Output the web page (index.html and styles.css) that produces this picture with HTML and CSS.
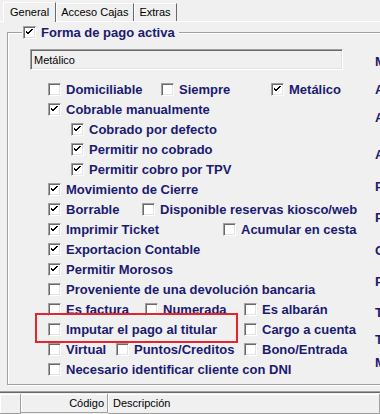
FILE: index.html
```html
<!DOCTYPE html>
<html lang="es">
<head>
  <meta charset="UTF-8" />
  <title>Forma de pago</title>
  <link rel="stylesheet" href="styles.css">
</head>
<body>
  <div class="tabs">
    <div class="tab active">General</div>
    <div class="tab">Acceso Cajas</div>
    <div class="tab">Extras</div>
  </div>

  <fieldset class="group">
    <legend><span class="cb on"><svg viewBox="0 0 11 11"><polyline points="2,4.5 4,6.5 8.5,2"/></svg></span>Forma de pago activa</legend>

    <div class="group-body">
      <div class="left">
        <div class="field">Metálico</div>

        <div class="row">
          <div class="opt w113"><span class="cb"></span>Domiciliable</div>
          <div class="opt w110"><span class="cb"></span>Siempre</div>
          <div class="opt"><span class="cb on"><svg viewBox="0 0 11 11"><polyline points="2,4.5 4,6.5 8.5,2"/></svg></span>Metálico</div>
        </div>
        <div class="row">
          <div class="opt"><span class="cb on"><svg viewBox="0 0 11 11"><polyline points="2,4.5 4,6.5 8.5,2"/></svg></span>Cobrable manualmente</div>
        </div>
        <div class="row sub">
          <div class="opt"><span class="cb on"><svg viewBox="0 0 11 11"><polyline points="2,4.5 4,6.5 8.5,2"/></svg></span>Cobrado por defecto</div>
        </div>
        <div class="row sub">
          <div class="opt"><span class="cb on"><svg viewBox="0 0 11 11"><polyline points="2,4.5 4,6.5 8.5,2"/></svg></span>Permitir no cobrado</div>
        </div>
        <div class="row sub">
          <div class="opt"><span class="cb on"><svg viewBox="0 0 11 11"><polyline points="2,4.5 4,6.5 8.5,2"/></svg></span>Permitir cobro por TPV</div>
        </div>
        <div class="row">
          <div class="opt"><span class="cb on"><svg viewBox="0 0 11 11"><polyline points="2,4.5 4,6.5 8.5,2"/></svg></span>Movimiento de Cierre</div>
        </div>
        <div class="row">
          <div class="opt w94"><span class="cb on"><svg viewBox="0 0 11 11"><polyline points="2,4.5 4,6.5 8.5,2"/></svg></span>Borrable</div>
          <div class="opt"><span class="cb"></span>Disponible reservas kiosco/web</div>
        </div>
        <div class="row">
          <div class="opt w175"><span class="cb on"><svg viewBox="0 0 11 11"><polyline points="2,4.5 4,6.5 8.5,2"/></svg></span>Imprimir Ticket</div>
          <div class="opt"><span class="cb"></span>Acumular en cesta</div>
        </div>
        <div class="row">
          <div class="opt"><span class="cb on"><svg viewBox="0 0 11 11"><polyline points="2,4.5 4,6.5 8.5,2"/></svg></span>Exportacion Contable</div>
        </div>
        <div class="row">
          <div class="opt"><span class="cb on"><svg viewBox="0 0 11 11"><polyline points="2,4.5 4,6.5 8.5,2"/></svg></span>Permitir Morosos</div>
        </div>
        <div class="row">
          <div class="opt"><span class="cb"></span>Proveniente de una devolución bancaria</div>
        </div>
        <div class="row">
          <div class="opt w97"><span class="cb"></span>Es factura</div>
          <div class="opt w99"><span class="cb"></span>Numerada</div>
          <div class="opt"><span class="cb"></span>Es albarán</div>
        </div>
        <div class="row">
          <div class="opt w196 marked"><span class="cb"></span>Imputar el pago al titular</div>
          <div class="opt"><span class="cb"></span>Cargo a cuenta</div>
        </div>
        <div class="row">
          <div class="opt w68"><span class="cb"></span>Virtual</div>
          <div class="opt w128"><span class="cb"></span>Puntos/Creditos</div>
          <div class="opt"><span class="cb"></span>Bono/Entrada</div>
        </div>
        <div class="row">
          <div class="opt"><span class="cb"></span>Necesario identificar cliente con DNI</div>
        </div>
      </div>

      <!-- second column, cut off by the window -->
      <div class="right">
        <div class="lbl mt3">Moneda</div>
        <div class="lbl mt8">Apertura</div>
        <div class="lbl mt8">Asiento</div>
        <div class="lbl mt17">Acción</div>
        <div class="lbl mt12">Prioridad</div>
        <div class="lbl mt11">Pago</div>
        <div class="lbl mt13">Cuenta</div>
        <div class="lbl mt11">Plazo</div>
        <div class="lbl mt11">Tipo</div>
        <div class="lbl mt7">Tarifa</div>
        <div class="lbl mt3">Máximo</div>
      </div>
    </div>
  </fieldset>

  <div class="grid">
    <div class="hcell first"></div>
    <div class="hcell code">Código</div>
    <div class="hcell desc">Descripción</div>
  </div>
</body>
</html>
```

FILE: styles.css
```css
body {
  margin: 0;
  width: 380px;
  height: 414px;
  overflow: hidden;
  background: #f0f0f0;
  font-family: "Liberation Sans", Arial, sans-serif;
  font-size: 11px;
  color: #000;
}

/* Tabs */
.tabs {
  display: flex;
  align-items: flex-end;
  height: 21px;
  padding-left: 3px;
  border-bottom: 1px solid #fff;
}

.tab {
  height: 17px;
  line-height: 17px;
  padding: 0 5px 0 4px;
  border: 1px solid #fff;
  border-right-color: #696969;
  border-bottom: none;
}

.tab.active {
  height: 19px;
  line-height: 19px;
  padding: 0 6px;
  margin-bottom: -1px;
  background: #f0f0f0;
  position: relative;
}

/* Group box */
.group {
  margin: 2px 0 0 7px;
  padding: 0 0 5px 0;
  width: 480px;
  border: 1px solid #a0a0a0;
  box-shadow: inset 1px 1px 0 #fff, 1px 1px 0 #fff;
}

.group legend {
  display: flex;
  align-items: center;
  gap: 5px;
  height: 16px;
  margin-left: 14px;
  padding: 0 4px 0 1px;
  background: #f0f0f0;
  font-weight: bold;
  font-size: 13px;
  color: #1a1a70;
}

.group-body {
  display: flex;
  margin-top: 9px;
}

.left {
  width: 367px;
  flex-shrink: 0;
}

.field {
  margin-left: 22px;
  width: 313px;
  height: 21px;
  box-sizing: border-box;
  border: 1px solid;
  border-color: #a0a0a0 #fff #fff #a0a0a0;
  box-shadow: inset 1px 1px 0 #696969, inset -1px -1px 0 #e3e3e3;
  padding: 4px 3px;
  line-height: 13px;
  margin-bottom: 9px;
}

.row {
  display: flex;
  height: 20px;
  padding-left: 40px;
}

.row.sub {
  padding-left: 63px;
}

.opt {
  display: flex;
  align-items: center;
  gap: 5px;
  height: 20px;
  font-weight: bold;
  font-size: 13px;
  color: #1a1a70;
  white-space: nowrap;
  flex-shrink: 0;
}

.w68 { width: 68px; }
.w94 { width: 94px; }
.w97 { width: 97px; }
.w99 { width: 99px; }
.w110 { width: 110px; }
.w113 { width: 113px; }
.w128 { width: 128px; }
.w175 { width: 175px; }
.w196 { width: 196px; }

/* red mark drawn over the option */
.marked {
  position: relative;
}

.marked::after {
  content: "";
  position: absolute;
  left: -13px;
  top: -6px;
  width: 199px;
  height: 26px;
  border: 2px solid #e3262b;
}

/* Checkbox */
.cb {
  width: 13px;
  height: 13px;
  box-sizing: border-box;
  background: #fff;
  border: 1px solid;
  border-color: #a0a0a0 #fff #fff #a0a0a0;
  box-shadow: inset 1px 1px 0 #696969, inset -1px -1px 0 #e3e3e3;
  flex-shrink: 0;
  display: flex;
}

.cb svg {
  width: 11px;
  height: 11px;
  fill: none;
  stroke: #000;
  stroke-width: 2;
  shape-rendering: crispEdges;
}

/* Right column */
.right {
  display: flex;
  flex-direction: column;
}

.lbl {
  height: 20px;
  line-height: 20px;
  font-weight: bold;
  font-size: 13px;
  color: #1a1a70;
  white-space: nowrap;
}

.mt3 { margin-top: 3px; }
.mt7 { margin-top: 7px; }
.mt8 { margin-top: 8px; }
.mt11 { margin-top: 11px; }
.mt12 { margin-top: 12px; }
.mt13 { margin-top: 13px; }
.mt17 { margin-top: 17px; }

/* Grid header */
.grid {
  display: flex;
  margin-top: 6px;
  border-top: 1px solid #a0a0a0;
  box-shadow: inset 0 1px 0 #696969;
  height: 22px;
}

.hcell {
  height: 19px;
  margin-top: 2px;
  line-height: 19px;
  border-right: 1px solid #a0a0a0;
  border-bottom: 1px solid #a0a0a0;
  box-shadow: inset 1px 1px 0 #fff;
}

.hcell.first {
  width: 20px;
}

.hcell.code {
  width: 87px;
  text-align: right;
  padding-right: 3px;
  box-sizing: border-box;
}

.hcell.desc {
  flex: 1;
  padding-left: 5px;
}
```
